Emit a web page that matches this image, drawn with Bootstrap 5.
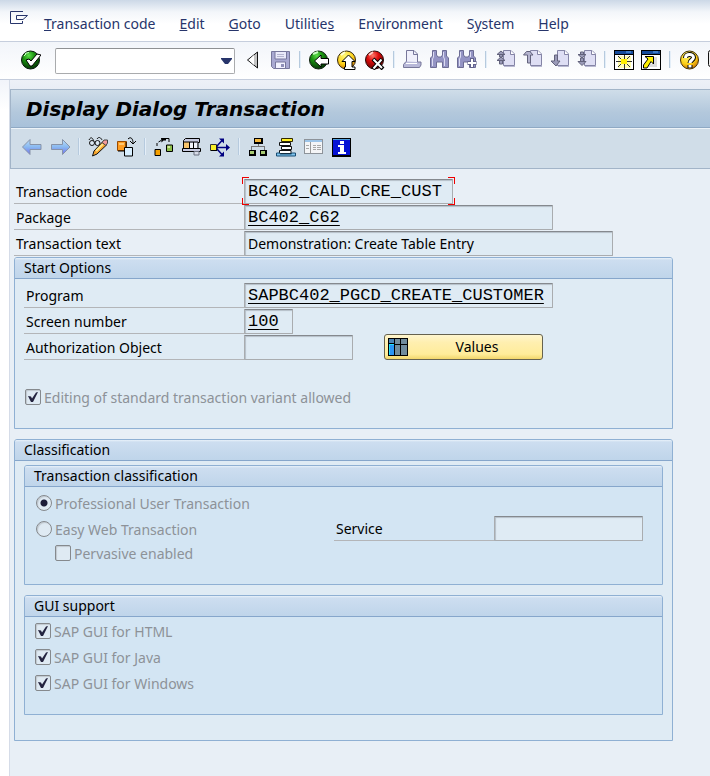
<!DOCTYPE html>
<html lang="en">
<head>
<meta charset="utf-8">
<meta name="viewport" content="width=device-width, initial-scale=1">
<title>Display Dialog Transaction</title>
<link href="https://cdn.jsdelivr.net/npm/bootstrap@5.3.0/dist/css/bootstrap.min.css" rel="stylesheet">
<style>
body{font-family:"Noto Sans","DejaVu Sans Condensed",sans-serif;font-size:14px;line-height:20px;color:#000;background:#fff}
svg{display:block;flex:none}
.menu-bar{height:42px;padding:6px 10px 0;gap:24px;background:linear-gradient(#ccd8e7,#f3f6fa 12px,#fff 24px);border-bottom:1px solid #c6cedd}
.menu-bar a{color:#27356b;text-decoration:none}
.menu-bar svg{margin:0 -8px 11px 0}
.std-bar{height:38px;padding:0 0 2px 21px;gap:8px;background:linear-gradient(#f2f5fa,#fff);border-bottom:1px solid #c6cedd}
.late-group{gap:7px}
.late-group .tool-sep{margin:0 1px}
.icon-btn{width:20px;height:20px;padding:0;border:0;background:none;flex:none}
.tool-sep{width:2px;height:17px;background:#b6cade;border-right:1px solid #e4eef8;flex:none}
.combo{width:180px;height:26px;margin:2px 0 0 6px;border:1px solid #a9abad;border-top-color:#8f9193;border-radius:2px;background:#fff;flex:none}
.combo input,.combo button{border:0;background:none;padding:0;min-width:0}
.combo input{padding-left:4px}
.combo button{width:24px}
.edge{width:10px;flex:none;background:linear-gradient(#f1f4fa,#fff 30px);border-right:1px solid #d5dce8}
.work{background:#e8eff6}
.gap-band{height:9px;background:linear-gradient(#edf0f7,#e8edf5)}
.frame-top{border:1px solid #a2b4c8;border-right:0}
.title-bar{height:38px;padding-left:15px;background:linear-gradient(#cfdde9,#b3c8dc 60%,#a8c1da);border-bottom:1px solid #8fa9c4}
.title-bar h1{font-family:"DejaVu Sans",sans-serif;font-size:20px;line-height:24px;font-weight:bold;font-style:italic;margin:0}
.app-bar{height:40px;padding:0 0 4px 11px;gap:8px;background:#d0dde8;border-top:1px solid #edf3f8}
.form-area{padding:10px 37px 35px 4px}
.line{height:25px;margin-bottom:1px}
.line>label{width:230px;flex:none;padding:3px 0 0 2px;border-bottom:1px solid #b3b5b8}
.pane .line>label{width:220px}
.fld{height:25px;padding:0 3px;border:1px solid #a9acaf;border-top:1px solid #85898e;border-radius:1px;background:#dfebf4;box-shadow:inset 1px 1px 1px #b5bfc8;color:#000;min-width:0;display:block}
.mono{font-family:"Liberation Mono",monospace;font-size:17px}
.linked{text-decoration:underline;text-underline-offset:3px}
.w-a{width:209px}.w-b{width:309px}.w-c{width:369px}.w-d{width:49px}.w-e{width:109px}
.focus-box{position:relative}
.focus-box::after{content:"";position:absolute;inset:-2px -2px -1px;pointer-events:none;
background:linear-gradient(#e00,#e00) 0 0/7px 1px,linear-gradient(#e00,#e00) 0 0/1px 7px,linear-gradient(#e00,#e00) 100% 0/7px 1px,linear-gradient(#e00,#e00) 100% 0/1px 7px,linear-gradient(#e00,#e00) 0 100%/7px 1px,linear-gradient(#e00,#e00) 0 100%/1px 7px,linear-gradient(#e00,#e00) 100% 100%/7px 1px,linear-gradient(#e00,#e00) 100% 100%/1px 7px;background-repeat:no-repeat}
.pane{border:1px solid #8fb0d3;border-radius:3px 3px 0 0;background:#dfebf4;margin-bottom:10px}
.pane h2{font-size:14px;line-height:20px;height:21px;font-weight:normal;margin:0;padding-left:9px;background:linear-gradient(#e8f1fa,#cddef0 2px,#bfd5ea);border-bottom:1px solid #86a6cb;border-radius:2px 2px 0 0}
.pane .pane{background:#d3e5f3}
.pane-body{padding:4px 9px 18px}
.pane-outer{padding-bottom:25px}
.pane-radios{padding:3px 9px 20px 11px}
.pane-checks{padding:1px 10px 18px}
.values-btn{height:26px;width:159px;margin-left:31px;padding:0 0 0 3px;gap:4px;border:1px solid #66624f;border-radius:3px;background:linear-gradient(#fff6cf,#ffefb0 30%,#ffec9a 80%,#f2d66b);color:#000;flex:none}
.opt{height:26px;gap:3px;color:#8d9298}
.opt label{padding-top:1px}
.opt input{appearance:none;width:16px;height:16px;margin:0;border:1px solid #85898d;background:#dfeaf3 center/14px 14px no-repeat;box-shadow:inset 1px 1px 1px #c0c8cf;border-radius:2px;flex:none}
.opt input[type=checkbox]:checked{background-image:url("data:image/svg+xml,%3Csvg xmlns='http://www.w3.org/2000/svg' viewBox='0 0 14 14'%3E%3Cpath d='M2 6L5 6.500L6 8.500L10 2.500L12 2L7 12H5Z' fill='%2323233f'/%3E%3C/svg%3E")}
.opt input[type=radio]{border-radius:50%}
.opt input[type=radio]:checked{background-image:radial-gradient(circle,#1d1d38 3px,transparent 4px)}
.opt-edit{margin-top:24px;padding-left:1px}
.opt-sub{height:22px;padding-left:19px}
.pane .service-line{margin-right:10px}
.pane .service-line>label{width:160px}
.w-f{width:149px}
</style>
<script src="https://cdn.jsdelivr.net/npm/bootstrap@5.3.0/dist/js/bootstrap.bundle.min.js"></script>
</head>
<body class="min-vh-100 d-flex flex-column overflow-x-hidden">
<svg width="0" height="0" class="position-absolute" aria-hidden="true">
<defs>
<radialGradient id="gGreen" cx=".4" cy=".25" r=".8"><stop offset="0" stop-color="#5ee04a"/><stop offset=".4" stop-color="#1a9210"/><stop offset="1" stop-color="#032b05"/></radialGradient>
<radialGradient id="gYellow" cx=".4" cy=".25" r=".8"><stop offset="0" stop-color="#fff97a"/><stop offset=".6" stop-color="#fccf18"/><stop offset="1" stop-color="#c86a00"/></radialGradient>
<radialGradient id="gRed" cx=".4" cy=".25" r=".8"><stop offset="0" stop-color="#ff7a6a"/><stop offset=".4" stop-color="#dc0c0c"/><stop offset="1" stop-color="#5b0000"/></radialGradient>
<linearGradient id="gArrow" x1="0" y1="0" x2="0" y2="1"><stop offset="0" stop-color="#b8ddfa"/><stop offset=".5" stop-color="#8ab9f0"/><stop offset="1" stop-color="#7272f0"/></linearGradient>
<symbol id="sheet" viewBox="0 0 20 20"><path d="M7.500 2.500H15L18.500 6V17.500H7.500Z" fill="#dedef4" stroke="#8484a6"/><path d="M14.500 2.500V6.500H18.500" fill="#fff" stroke="#8484a6"/><path d="M8 18.500H19.500V7" fill="none" stroke="#b9b9d2"/></symbol>
</defs>
</svg>

<nav class="menu-bar d-flex align-items-center" aria-label="Menu">
<svg width="18" height="14" viewBox="0 0 18 14" fill="none" stroke="#27356b"><path d="M13 .5H.5V12.500H12.500V10M6.500 4.500H17.500L13 8.500H6.500Z"/></svg>
<a href="#"><u>T</u>ransaction code</a><a href="#"><u>E</u>dit</a><a href="#"><u>G</u>oto</a><a href="#">Utilitie<u>s</u></a><a href="#">En<u>v</u>ironment</a><a href="#">S<u>y</u>stem</a><a href="#"><u>H</u>elp</a>
</nav>

<div class="std-bar d-flex align-items-center overflow-hidden" role="toolbar" aria-label="Standard">
<button class="icon-btn" aria-label="Enter"><svg width="20" height="20" viewBox="0 0 20 20"><circle cx="9.500" cy="10" r="9" fill="url(#gGreen)" stroke="#06160a"/><path d="M4 3.500l4-1M3 6l2-2" stroke="#c8ffc0"/><path d="M5 10l3-1 2 2 6-7 4 1-9 11H9Z" fill="#fff" stroke="#000"/></svg></button>
<div class="combo d-flex"><input class="flex-grow-1" type="text" aria-label="Command"><button aria-label="Show history"><svg width="24" height="24" viewBox="0 0 24 24"><path d="M6 9h11v1l-4 5h-3l-4-5z" fill="#27356b"/></svg></button></div>
<button class="icon-btn" aria-label="Collapse"><svg width="20" height="20" viewBox="0 0 20 20"><path d="M14.500 2V18L4.500 10Z" fill="#c4c4c4" stroke="#111"/><path d="M11 5V15L5.500 10Z" fill="#fff"/></svg></button>
<button class="icon-btn" aria-label="Save"><svg width="20" height="20" viewBox="0 0 20 20"><path d="M.5 1.500H18.500V18.500H2.500L.5 16.500Z" fill="#a9a9d2" stroke="#77779c"/><path d="M4 1.500H15.500V9H4Z" fill="#eaeafa" stroke="#77779c"/><path d="M6 4.500h7M6 6.500h7" stroke="#b5b5d0"/><path d="M4.500 12H14.500V18.500H4.500Z" fill="#f2f2ff" stroke="#77779c"/><path d="M10 14h3v3h-3z" fill="#8f8fb8"/></svg></button>
<span class="tool-sep"></span>
<button class="icon-btn" aria-label="Back"><svg width="20" height="20" viewBox="0 0 20 20"><circle cx="9.500" cy="10" r="9" fill="url(#gGreen)" stroke="#102010"/><path d="M4 4l5-2" stroke="#c8ffc0" stroke-width="2"/><path d="M5.500 11L12 5V8.500H19.500V14H12V17Z" fill="#fff" stroke="#000"/></svg></button>
<button class="icon-btn" aria-label="Exit"><svg width="20" height="20" viewBox="0 0 20 20"><circle cx="9.500" cy="10" r="9" fill="url(#gYellow)" stroke="#33250a"/><path d="M4 5l4-3" stroke="#ffffd8" stroke-width="2"/><path d="M11.500 5L18 11.500H15V17H18V19.500H7.500V17H8.500V11.500H5Z" fill="#fff" stroke="#000"/></svg></button>
<button class="icon-btn" aria-label="Cancel"><svg width="20" height="20" viewBox="0 0 20 20"><circle cx="9.500" cy="10" r="9" fill="url(#gRed)" stroke="#260808"/><path d="M4 5l4-3" stroke="#ffd0c8" stroke-width="2"/><path d="M8 9L18 19M17 9L8 19" stroke="#000" stroke-width="4"/><path d="M8.500 9.500L17 18M16.500 9.500L8.500 18.500" stroke="#fff" stroke-width="2"/></svg></button>
<span class="tool-sep"></span>
<div class="late-group d-flex align-items-center">
<button class="icon-btn" aria-label="Print"><svg width="20" height="20" viewBox="0 0 20 20"><path d="M3.500 .5H11L14.500 4V12.500H3.500Z" fill="#f0f0fb" stroke="#77779a"/><path d="M10.500 .5V4.500H14.500" fill="none" stroke="#77779a"/><path d="M3 11.500L.5 14.500V17.500H16.500L18 15V12H14.500" fill="#b8b8d8" stroke="#77779a"/><path d="M3 13.500H14" stroke="#fff"/></svg></button>
<button class="icon-btn" aria-label="Find"><svg width="20" height="20" viewBox="0 0 20 20"><path d="M2.500 .5H6.500V5L8 7H11L12.500 5V.5H16.500V6L18.500 8V17.500H12.500V12H6.500V17.500H.5V8L2.500 6Z" fill="#9494c4" stroke="#6c6c94"/><path d="M3.500 2V7L2.500 9V16M13.500 2V7L14.500 9V16" stroke="#dcdcf2" fill="none"/></svg></button>
<button class="icon-btn" aria-label="Find next"><svg width="20" height="20" viewBox="0 0 20 20"><path d="M2.500 .5H6.500V5L8 7H11L12.500 5V.5H16.500V6L18.500 8V17.500H12.500V12H6.500V17.500H.5V8L2.500 6Z" fill="#9494c4" stroke="#6c6c94"/><path d="M3.500 2V7L2.500 9V16M13.500 2V7" stroke="#dcdcf2" fill="none"/><path d="M15 8V18M10.500 13H19.500" stroke="#62628c" stroke-width="4"/><path d="M15 9V17M11 13H19" stroke="#fff" stroke-width="2"/></svg></button>
<span class="tool-sep"></span>
<button class="icon-btn" aria-label="First page"><svg width="20" height="20" viewBox="0 0 20 20"><use href="#sheet" x="1" y="-2" width="20" height="20"/><path d="M2 4.500L6 1L10 4.500ZM2 10.500L6 7L10 10.500ZM4.500 10.500h3V14h-3zM4.500 4.500h3V7h-3z" fill="#9a9ab8" stroke="#62627c"/></svg></button>
<button class="icon-btn" aria-label="Previous page"><svg width="20" height="20" viewBox="0 0 20 20"><use href="#sheet" x="1" y="-2" width="20" height="20"/><path d="M1.500 5L4.500 1.500H8L11 5H8.500V13H5.500V5Z" fill="#b4b4cf" stroke="#62627c"/></svg></button>
<button class="icon-btn" aria-label="Next page"><svg width="20" height="20" viewBox="0 0 20 20"><use href="#sheet" x="1" y="-2" width="20" height="20"/><path d="M5.500 5H8.500V11H11L7 16L2 11H5.500Z" fill="#9a9ab8" stroke="#62627c"/></svg></button>
<button class="icon-btn" aria-label="Last page"><svg width="20" height="20" viewBox="0 0 20 20"><use href="#sheet" x="1" y="-2" width="20" height="20"/><path d="M2 4.500H10L6 8ZM2 11.500H10L6 15.500ZM4.500 2h3v2.500h-3zM4.500 8h3v3.500h-3z" fill="#9a9ab8" stroke="#62627c"/></svg></button>
<span class="tool-sep"></span>
<button class="icon-btn" aria-label="New session"><svg width="20" height="20" viewBox="0 0 20 20" shape-rendering="crispEdges"><path d="M0 0h20v20H0z" fill="#000"/><path d="M1 5h18v14H1z" fill="#fff"/><path d="M1 1h18v3H1z" fill="#174c9c"/><path d="M12 1h5v2h-5z" fill="#3c7ac8"/><path d="M4 6h13v12H4z" fill="#fffcb0"/><path d="M10 5V10M10 13V19M2 11.500H8M12 11.500H18M4 6L8 10M16 6L12 10M4 17L8 13M16 17L12 13" stroke="#333" stroke-width="1"/><path d="M7 9h6v5H7z" fill="#ffee00"/></svg></button>
<button class="icon-btn" aria-label="Shortcut"><svg width="20" height="20" viewBox="0 0 20 20"><path d="M0 0h20v20H0z"/><path d="M1 5h18v14H1z" fill="#fff"/><path d="M1 1h18v3H1z" fill="#174c9c"/><path d="M12 1h5v2h-5z" fill="#3c7ac8"/><path d="M13 7h3v10H5v-3h8z" fill="#ddd"/><path d="M4 6.500H12.500V14L10 11.500L6 18H2.500V15L7 9Z" fill="#fff000" stroke="#000"/></svg></button>
<span class="tool-sep"></span>
<button class="icon-btn" aria-label="Help"><svg width="20" height="20" viewBox="0 0 20 20"><circle cx="10.500" cy="10" r="9" fill="url(#gYellow)" stroke="#403008"/><path d="M6.500 8C6.500 3.500 14.500 3.500 14.500 7.500C14.500 10 11 10 11 13M11 15V18" fill="none" stroke="#000" stroke-width="5"/><path d="M6.500 8C6.500 3.500 14.500 3.500 14.500 7.500C14.500 10 11 10 11 13M11 15V17.500" fill="none" stroke="#fff" stroke-width="3"/></svg></button>
<button class="icon-btn" aria-label="Customize layout"><svg width="20" height="20" viewBox="0 0 20 20"><rect x="2.500" y=".5" width="17" height="16" rx="2" fill="#eee" stroke="#111"/></svg></button>
</div>
</div>

<main class="d-flex flex-grow-1">
<div class="edge"></div>
<div class="work flex-grow-1">
<div class="gap-band"></div>
<div class="frame-top">
<div class="title-bar d-flex align-items-center"><h1>Display Dialog Transaction</h1></div>
<div class="app-bar d-flex align-items-center" role="toolbar" aria-label="Application">
<button class="icon-btn" aria-label="Previous object"><svg width="20" height="20" viewBox="0 0 20 20"><path d="M.5 10L8 2.500V7.500H19V12.500H8V17.500Z" fill="url(#gArrow)" stroke="#8793a8"/></svg></button>
<button class="icon-btn" aria-label="Next object"><svg width="20" height="20" viewBox="0 0 20 20"><path d="M20 10L12.500 2.500V7.500H1.500V12.500H12.500V17.500Z" fill="url(#gArrow)" stroke="#8793a8"/></svg></button>
<span class="tool-sep"></span>
<button class="icon-btn" aria-label="Display or change"><svg width="20" height="20" viewBox="0 0 20 20"><path d="M1 3C3-1 5 1 6 5M9 2C11-1 13 1 14 3" fill="none" stroke="#111"/><circle cx="4" cy="6" r="2.500" fill="#dce8f2" stroke="#111"/><circle cx="9.500" cy="6" r="2.500" fill="#dce8f2" stroke="#111"/><path d="M4.500 19L6 14L14.500 5L18.500 8L9 17Z" fill="#f8a52c" stroke="#111"/><path d="M8 14L15 7" stroke="#ffe58c" stroke-width="2"/><path d="M14 5.500L16 3H19.500V6L18 8.500Z" fill="#f49a9a" stroke="#444"/></svg></button>
<button class="icon-btn" aria-label="Other object"><svg width="20" height="20" viewBox="0 0 20 20"><path d="M1.500 4.500H10.500V13.500H1.500Z" fill="#ff9d22" stroke="#9b4b00"/><path d="M2 14H10V5" fill="none" stroke="#000"/><path d="M3 6h5v2H3z" fill="#ffc770"/><path d="M8.500 10.500H16.500V19H8.500Z" fill="#d9efff" stroke="#000"/><path d="M12 2C15-1 17 2 17 6M14 4L17 7L20 4" fill="none" stroke="#000"/></svg></button>
<span class="tool-sep"></span>
<button class="icon-btn" aria-label="Check"><svg width="20" height="20" viewBox="0 0 20 20"><path d="M1 12.500H6.500V18.500H1Z" fill="#f6a000" stroke="#000"/><path d="M12.500 8H18.500V14.500H12.500Z" fill="#8fc04a" stroke="#000"/><path d="M13.500 9H16V11H13.500Z" fill="#d2ea9c"/><path d="M3 9V6M4.500 5L7 3.500M10 1.500H15V5" fill="none" stroke="#000"/><path d="M7 1H12V3.500H9.500L7.500 5.500Z"/></svg></button>
<button class="icon-btn" aria-label="Where used"><svg width="20" height="20" viewBox="0 0 20 20"><path d="M1.500 11V3.500L3.500 1.500H17.500V5.500H16V11.500H18.500V14.500H.5V11.500Z" fill="#c7cae0" stroke="#000"/><path d="M2 5h5v6H2z" fill="#f6c46c"/><path d="M2 5H16M7.500 5V11M11.500 5V11M1 11.500H18" stroke="#000"/><path d="M8 6h3v5H8zM12 6h3v5h-3z" fill="#f1f3fa"/><path d="M12 14.500H17V18H12Z" fill="#d8dce8" stroke="#6b7180"/></svg></button>
<button class="icon-btn" aria-label="Navigation"><svg width="20" height="20" viewBox="0 0 20 20"><path d="M.5 7.500H6.500V13.500H.5Z" fill="#f8ef28" stroke="#333"/><path d="M1 13.500H7V8" fill="none" stroke="#000"/><path d="M7 10.500H18M7 9L12 3.500M7 12L12 17.500" fill="none" stroke="#000080" stroke-width="1.500"/><path d="M16 7L20 10.500L16 14ZM9 1.500H14V6.500ZM9 19.500H14V14.500Z" fill="#000080"/></svg></button>
<span class="tool-sep"></span>
<button class="icon-btn" aria-label="Object list"><svg width="20" height="20" viewBox="0 0 20 20" shape-rendering="crispEdges"><path d="M6 1h9v6H6z"/><path d="M7 2h6v3H7z" fill="#f5b83c"/><path d="M10.500 7V10M3.500 13V9.500H16.500V13" fill="none" stroke="#777"/><path d="M1 13h7v6H1zM12 13h7v6h-7z"/><path d="M2 14h4v3H2zM13 14h4v3h-4z" fill="#a7ca72"/></svg></button>
<button class="icon-btn" aria-label="Navigation stack"><svg width="20" height="20" viewBox="0 0 20 20"><path d="M5.500 1.500H16.500V4.500H5.500Z" fill="#fff028" stroke="#302800"/><path d="M3.500 5.500H14.500V8.500H3.500ZM5.500 9.500H15.500V12.500H5.500ZM3.500 13.500H15V16.500H3.500Z" fill="#fff" stroke="#111"/><path d="M.5 16V19H19.500V16H15.500V17H4V16Z" fill="#80c4ee" stroke="#174c73"/></svg></button>
<button class="icon-btn" aria-label="Layout"><svg width="20" height="20" viewBox="0 0 20 20" shape-rendering="crispEdges"><path d="M.5 2.500H18.500V16.500H.5Z" fill="#f4f5f7" stroke="#8d939a"/><path d="M1 3h17v2H1z" fill="#9cc4e8"/><path d="M6.500 5V16" stroke="#999"/><path d="M2 8.500h3M2 11.500h3M9 8.500h3M13 8.500h4M9 10.500h3M13 10.500h4M9 12.500h3M13 12.500h4" stroke="#a8a8a8"/></svg></button>
<button class="icon-btn" aria-label="Information"><svg width="20" height="20" viewBox="0 0 20 20" shape-rendering="crispEdges"><path d="M0 1h19v19H0z"/><path d="M1 2h17v1H1z" fill="#4e9edd"/><path d="M1 3h17v15H1z" fill="#0612d4"/><path d="M8 4h4v3H8zM6 8h6v7h2v2H6v-2h2v-5H6z" fill="#fff"/></svg></button>
</div>
</div>

<form class="form-area">
<div class="line d-flex"><label for="tcode">Transaction code</label><div class="focus-box w-a"><input id="tcode" class="fld mono w-100" value="BC402_CALD_CRE_CUST" readonly></div></div>
<div class="line d-flex"><label for="pack">Package</label><input id="pack" class="fld mono linked w-b" value="BC402_C62" readonly></div>
<div class="line d-flex"><label for="ttext">Transaction text</label><input id="ttext" class="fld w-c" value="Demonstration: Create Table Entry" readonly></div>

<section class="pane">
<h2>Start Options</h2>
<div class="pane-body">
<div class="line d-flex"><label for="prog">Program</label><input id="prog" class="fld mono linked w-b" value="SAPBC402_PGCD_CREATE_CUSTOMER" readonly></div>
<div class="line d-flex"><label for="scr">Screen number</label><input id="scr" class="fld mono linked w-d" value="100" readonly></div>
<div class="line d-flex"><label for="auth">Authorization Object</label><input id="auth" class="fld w-e" readonly><button type="button" class="values-btn d-flex align-items-center align-self-end"><svg width="20" height="18" viewBox="0 0 20 18" shape-rendering="crispEdges"><path d="M0 0h20v18H0z"/><path d="M1 1h5v4H1z" fill="#4b83b5"/><path d="M1 6h5v11H1z" fill="#2a95f5"/><path d="M1 6h5v1H1zM1 6h1v11H1z" fill="#20e0ff"/><path d="M7 1h5v5H7zM13 1h6v5h-6zM7 7h5v10H7zM13 7h6v10h-6z" fill="#708b9c"/></svg><span class="flex-grow-1 text-center">Values</span></button></div>
<div class="opt opt-edit d-flex align-items-center"><input type="checkbox" id="edit" checked disabled><label for="edit">Editing of standard transaction variant allowed</label></div>
</div>
</section>

<section class="pane mb-0">
<h2>Classification</h2>
<div class="pane-body pane-outer">
<section class="pane">
<h2>Transaction classification</h2>
<div class="pane-radios">
<div class="opt d-flex align-items-center"><input type="radio" name="cls" id="prof" checked disabled><label for="prof">Professional User Transaction</label></div>
<div class="d-flex align-items-center">
<div class="opt d-flex align-items-center flex-grow-1"><input type="radio" name="cls" id="easy" disabled><label for="easy">Easy Web Transaction</label></div>
<div class="line service-line d-flex"><label for="serv">Service</label><input id="serv" class="fld w-f" readonly></div>
</div>
<div class="opt opt-sub d-flex align-items-center"><input type="checkbox" id="perv" disabled><label for="perv">Pervasive enabled</label></div>
</div>
</section>
<section class="pane mb-0">
<h2>GUI support</h2>
<div class="pane-checks">
<div class="opt d-flex align-items-center"><input type="checkbox" id="html" checked disabled><label for="html">SAP GUI for HTML</label></div>
<div class="opt d-flex align-items-center"><input type="checkbox" id="java" checked disabled><label for="java">SAP GUI for Java</label></div>
<div class="opt d-flex align-items-center"><input type="checkbox" id="win" checked disabled><label for="win">SAP GUI for Windows</label></div>
</div>
</section>
</div>
</section>
</form>
</div>
</main>
</body>
</html>
